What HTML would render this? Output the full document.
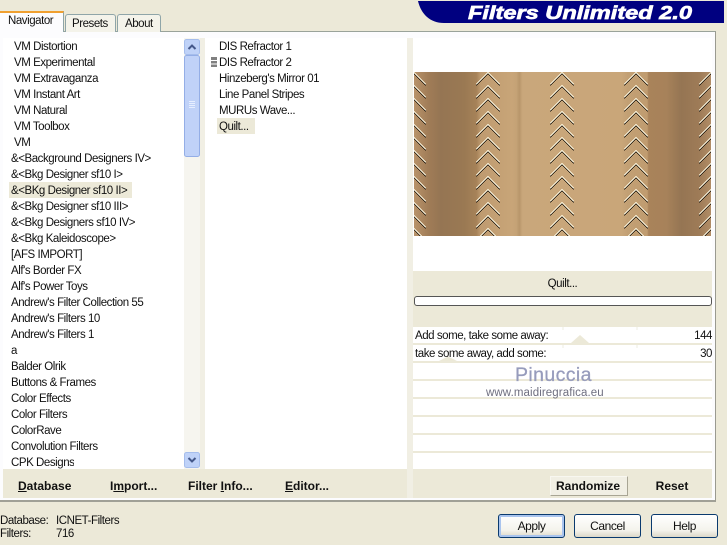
<!DOCTYPE html>
<html><head><meta charset="utf-8">
<style>
html,body{margin:0;padding:0}
body{width:727px;height:545px;position:relative;overflow:hidden;background:#ece9d8;font-family:"Liberation Sans",sans-serif;font-size:11.5px;letter-spacing:-.45px;color:#111}
.a{position:absolute}
.t{position:absolute;white-space:nowrap;line-height:18px;height:16px}
.b{font-weight:bold;font-size:12px;letter-spacing:0}
.btn{position:absolute;top:514px;width:65px;height:22px;border:1px solid #0a3a6e;border-radius:3px;background:linear-gradient(#fff,#f4f3ec 70%,#dcd8c8);text-align:center;line-height:23px;font-size:12px}
</style></head><body>
<!-- banner -->
<svg class="a" style="left:0;top:0" width="727" height="32"><path d="M418 1H724V23H444C430 23 421 14 418 1Z" fill="#000080"/>
<text x="468" y="19" font-family="Liberation Sans" font-weight="bold" font-style="italic" font-size="18.5" fill="#fff" textLength="224" lengthAdjust="spacingAndGlyphs" stroke="#fff" stroke-width=".7" letter-spacing="0">Filters Unlimited 2.0</text></svg>
<!-- panel -->
<div class="a" style="left:0;top:31px;width:716px;height:471px;background:#fcfcfe;border-top:1px solid #9aa39a;border-right:1px solid #9a9a90;border-bottom:2px solid #a0a096;box-sizing:border-box"></div>
<!-- tabs -->
<div class="a" style="left:65px;top:14px;width:49px;height:17px;background:#f4f3ea;border:1px solid #8fa5a8;border-bottom:0;border-radius:3px 3px 0 0"></div>
<div class="a" style="left:117px;top:14px;width:42px;height:17px;background:#f4f3ea;border:1px solid #8fa5a8;border-bottom:0;border-radius:3px 3px 0 0"></div>
<div class="a" style="left:0;top:11px;width:64px;height:21px;background:#fcfcfe;border-top:2px solid #f0a030;border-right:1px solid #8fa5a8;box-sizing:border-box"></div>
<div class="t" style="left:8px;top:12px">Navigator</div>
<div class="t" style="left:72px;top:15px">Presets</div>
<div class="t" style="left:125px;top:15px">About</div>
<!-- lists -->
<div class="a" style="left:3px;top:38px;width:181px;height:431px;background:#fff"></div>
<div class="a" style="left:205px;top:38px;width:202px;height:431px;background:#fff"></div>
<div class="a" style="left:200px;top:38px;width:5px;height:431px;background:#f1efe4"></div>
<div class="a" style="left:407px;top:38px;width:6px;height:460px;background:#f1efe4"></div>
<div class="a" style="left:9px;top:182px;width:123px;height:16px;background:#ece9d8"></div>
<div class="a" style="left:217px;top:118px;width:38px;height:16px;background:#ece9d8"></div>
<div class="t" style="left:14px;top:38px">VM Distortion</div>
<div class="t" style="left:14px;top:54px">VM Experimental</div>
<div class="t" style="left:14px;top:70px">VM Extravaganza</div>
<div class="t" style="left:14px;top:86px">VM Instant Art</div>
<div class="t" style="left:14px;top:102px">VM Natural</div>
<div class="t" style="left:14px;top:118px">VM Toolbox</div>
<div class="t" style="left:14px;top:134px">VM</div>
<div class="t" style="left:11px;top:150px">&amp;&lt;Background Designers IV&gt;</div>
<div class="t" style="left:11px;top:166px">&amp;&lt;Bkg Designer sf10 I&gt;</div>
<div class="t" style="left:11px;top:182px">&amp;&lt;BKg Designer sf10 II&gt;</div>
<div class="t" style="left:11px;top:198px">&amp;&lt;Bkg Designer sf10 III&gt;</div>
<div class="t" style="left:11px;top:214px">&amp;&lt;Bkg Designers sf10 IV&gt;</div>
<div class="t" style="left:11px;top:230px">&amp;&lt;Bkg Kaleidoscope&gt;</div>
<div class="t" style="left:11px;top:246px">[AFS IMPORT]</div>
<div class="t" style="left:11px;top:262px">Alf's Border FX</div>
<div class="t" style="left:11px;top:278px">Alf's Power Toys</div>
<div class="t" style="left:11px;top:294px">Andrew's Filter Collection 55</div>
<div class="t" style="left:11px;top:310px">Andrew's Filters 10</div>
<div class="t" style="left:11px;top:326px">Andrew's Filters 1</div>
<div class="t" style="left:11px;top:342px">a</div>
<div class="t" style="left:11px;top:358px">Balder Olrik</div>
<div class="t" style="left:11px;top:374px">Buttons &amp; Frames</div>
<div class="t" style="left:11px;top:390px">Color Effects</div>
<div class="t" style="left:11px;top:406px">Color Filters</div>
<div class="t" style="left:11px;top:422px">ColorRave</div>
<div class="t" style="left:11px;top:438px">Convolution Filters</div>
<div class="t" style="left:11px;top:454px;height:15px;overflow:hidden">CPK Designs</div>
<div class="t" style="left:219px;top:38px">DIS Refractor 1</div>
<div class="t" style="left:219px;top:54px">DIS Refractor 2</div>
<div class="t" style="left:219px;top:70px">Hinzeberg's Mirror 01</div>
<div class="t" style="left:219px;top:86px">Line Panel Stripes</div>
<div class="t" style="left:219px;top:102px">MURUs Wave...</div>
<div class="t" style="left:219px;top:118px">Quilt...</div>
<!-- grip + scrollbar -->
<svg class="a" style="left:184px;top:38px" width="34" height="432">
<rect x="0" y="0" width="16" height="431" fill="#f6f5ef"/>
<rect x="27" y="19" width="6" height="3" fill="#808080"/><rect x="27" y="23" width="6" height="2.5" fill="#808080"/><rect x="27" y="26.5" width="6" height="2.5" fill="#808080"/>
<rect x=".5" y="1.5" width="15" height="15" rx="2" fill="#bfd2f8" stroke="#a5bdec"/>
<path d="M4.5 11L8 7.5L11.5 11" fill="none" stroke="#44588a" stroke-width="2"/>
<rect x=".5" y="17.5" width="15" height="101" rx="2" fill="#c0d2f8" stroke="#94aee6"/>
<path d="M5 63.5h6M5 65.5h6M5 67.5h6M5 69.5h6" stroke="#e6eeff" stroke-width="1"/>
<rect x=".5" y="414.5" width="15" height="15" rx="2" fill="#bfd2f8" stroke="#a5bdec"/>
<path d="M4.5 420L8 423.5L11.5 420" fill="none" stroke="#44588a" stroke-width="2"/>
</svg>
<!-- bottom left strip -->
<div class="a" style="left:3px;top:469px;width:404px;height:29px;background:#ece9d8"></div>
<div class="t b" style="left:18px;top:477px"><u>D</u>atabase</div>
<div class="t b" style="left:110px;top:477px">I<u>m</u>port...</div>
<div class="t b" style="left:188px;top:477px">Filter <u>I</u>nfo...</div>
<div class="t b" style="left:285px;top:477px"><u>E</u>ditor...</div>
<!-- preview -->
<div class="a" style="left:413px;top:38px;width:299px;height:233px;background:#fff"></div>
<svg class="a" style="left:414px;top:72px" width="297" height="164" viewBox="0 0 297 164">
<defs>
<linearGradient id="g" x1="0" x2="1" y1="0" y2="0">
<stop offset="0" stop-color="#b8936a"/><stop offset=".05" stop-color="#a07c57"/><stop offset=".09" stop-color="#957553"/>
<stop offset=".17" stop-color="#9a7953"/><stop offset=".21" stop-color="#a68258"/><stop offset=".225" stop-color="#bf9b70"/>
<stop offset=".33" stop-color="#c8a578"/><stop offset=".345" stop-color="#c5a276"/><stop offset=".355" stop-color="#b8966b"/><stop offset=".365" stop-color="#c9a77b"/>
<stop offset=".7" stop-color="#c9a679"/><stop offset=".72" stop-color="#c2a074"/><stop offset=".785" stop-color="#c09c70"/><stop offset=".79" stop-color="#a9835a"/>
<stop offset=".85" stop-color="#a7825a"/><stop offset=".9" stop-color="#957553"/><stop offset=".96" stop-color="#9e7b57"/><stop offset="1" stop-color="#b18d66"/>
</linearGradient>
<g id="col" fill="none" stroke-width="1" shape-rendering="crispEdges">
<path stroke="#140e06" d="M-12 13.5L0 1.5L12 13.5M-12 26.5L0 14.5L12 26.5M-12 39.5L0 27.5L12 39.5M-12 52.5L0 40.5L12 52.5M-12 65.5L0 53.5L12 65.5M-12 78.5L0 66.5L12 78.5M-12 91.5L0 79.5L12 91.5M-12 104.5L0 92.5L12 104.5M-12 117.5L0 105.5L12 117.5M-12 130.5L0 118.5L12 130.5M-12 143.5L0 131.5L12 143.5M-12 156.5L0 144.5L12 156.5M-12 169.5L0 157.5L12 169.5"/>
<path stroke="#fff8e0" d="M-12 12.5L0 .5L12 12.5M-12 25.5L0 13.5L12 25.5M-12 38.5L0 26.5L12 38.5M-12 51.5L0 39.5L12 51.5M-12 64.5L0 52.5L12 64.5M-12 77.5L0 65.5L12 77.5M-12 90.5L0 78.5L12 90.5M-12 103.5L0 91.5L12 103.5M-12 116.5L0 104.5L12 116.5M-12 129.5L0 117.5L12 129.5M-12 142.5L0 130.5L12 142.5M-12 155.5L0 143.5L12 155.5M-12 168.5L0 156.5L12 168.5"/>
</g>
</defs>
<rect width="297" height="164" fill="url(#g)"/>
<use href="#col" x="74"/>
<use href="#col" x="148"/>
<use href="#col" x="222"/>
<use href="#col" x="0"/>
<use href="#col" x="297"/>
</svg>
<!-- quilt band -->
<div class="a" style="left:413px;top:271px;width:299px;height:56px;background:#ece9d8"></div>
<div class="t" style="left:413px;top:275px;width:299px;text-align:center">Quilt...</div>
<div class="a" style="left:414px;top:296px;width:296px;height:8px;background:#fff;border:1px solid #555;border-radius:3px"></div>
<!-- rows -->
<div class="a" style="left:413px;top:327px;width:299px;height:142px;background:#ece9d8"></div>
<div class="a" style="left:413px;top:327px;width:299px;height:16px;background:#fff"></div>
<div class="a" style="left:413px;top:345px;width:299px;height:16px;background:#fff"></div>
<div class="a" style="left:413px;top:363px;width:299px;height:16px;background:#fff"></div>
<div class="a" style="left:413px;top:381px;width:299px;height:16px;background:#fff"></div>
<div class="a" style="left:413px;top:399px;width:299px;height:16px;background:#fff"></div>
<div class="a" style="left:413px;top:417px;width:299px;height:16px;background:#fff"></div>
<div class="a" style="left:413px;top:435px;width:299px;height:16px;background:#fff"></div>
<div class="a" style="left:413px;top:453px;width:299px;height:16px;background:#fff"></div>
<svg class="a" style="left:413px;top:327px" width="299" height="40">
<path d="M158 16L167 8L176 16Z" fill="#ece9d8"/>
<path d="M26 34L35 29.5L44 34Z" fill="#ece9d8"/>
<path d="M150 0v3M224 0v3M150 18v3M224 18v3" stroke="#eeece2"/>
</svg>
<div class="t" style="left:415px;top:327px">Add some, take some away:</div>
<div class="t" style="left:415px;top:345px">take some away, add some:</div>
<div class="t" style="right:15px;top:327px">144</div>
<div class="t" style="right:15px;top:345px">30</div>
<!-- watermark -->
<div class="t" style="left:515px;top:365px;line-height:20px;height:20px;font-size:19.5px;color:#979cbc;letter-spacing:.4px;-webkit-text-stroke:.3px #979cbc">Pinuccia</div>
<div class="t" style="left:486px;top:384px;font-size:11.5px;color:#6f6f80;letter-spacing:.1px">www.maidiregrafica.eu</div>
<!-- right bottom strip -->
<div class="a" style="left:413px;top:469px;width:299px;height:29px;background:#ece9d8"></div>
<div class="a" style="left:550px;top:476px;width:76px;height:18px;background:#f1efe4;border:1px solid;border-color:#f8f7f0 #a8a594 #a8a594 #f8f7f0"></div>
<div class="t b" style="left:549px;top:477px;width:78px;text-align:center">Randomize</div>
<div class="t b" style="left:632px;top:477px;width:80px;text-align:center">Reset</div>
<!-- status -->
<div class="t" style="left:0;top:512px">Database:</div>
<div class="t" style="left:56px;top:512px">ICNET-Filters</div>
<div class="t" style="left:0;top:525px">Filters:</div>
<div class="t" style="left:56px;top:525px">716</div>
<!-- buttons -->
<div class="btn" style="left:498px;box-shadow:inset 0 0 0 2px #a9c4ee">Apply</div>
<div class="btn" style="left:574px">Cancel</div>
<div class="btn" style="left:651px">Help</div>
</body></html>
